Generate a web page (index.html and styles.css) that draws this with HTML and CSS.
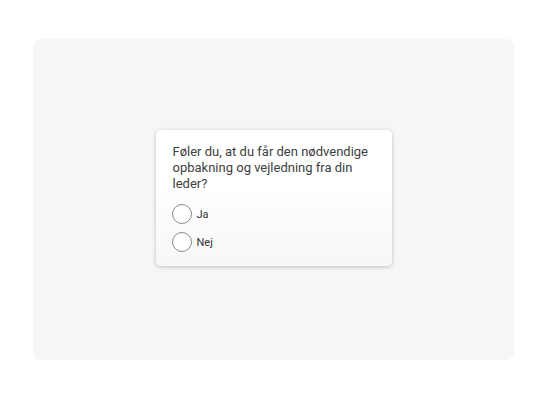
FILE: index.html
```html
<!DOCTYPE html>
<html lang="da">
<head>
    <meta charset="UTF-8">
    <meta name="viewport" content="width=device-width, initial-scale=1.0">
    <title>Spørgsmål</title>
    <link rel="stylesheet" href="styles.css">
</head>
<body>
    <div class="stage">
        <div class="question-card">
            <p class="question">Føler du, at du får den nødvendige opbakning og vejledning fra din leder?</p>
            <div class="options">
                <label class="option">
                    <span class="radio"></span>
                    <span class="option-label">Ja</span>
                </label>
                <label class="option">
                    <span class="radio"></span>
                    <span class="option-label">Nej</span>
                </label>
            </div>
        </div>
    </div>
</body>
</html>
```

FILE: styles.css
```css
* {
    box-sizing: border-box;
}
body {
    margin: 0;
    background: #fff;
    font-family: Roboto, "Liberation Sans", sans-serif;
}
.stage {
    margin: 39px 0 0 33px;
    width: 481px;
    height: 321px;
    background: #f6f6f6;
    border-radius: 8px;
    display: flex;
    justify-content: center;
    align-items: center;
}
.question-card {
    width: 236px;
    margin-top: -3px;
    padding: 14px 17px 14px;
    background: linear-gradient(#fff 40%, #f7f7f7);
    border-radius: 5px;
    box-shadow: 0 1px 4px rgba(0, 0, 0, 0.22);
}
.question {
    margin: 0;
    font-size: 13px;
    line-height: 16px;
    color: #404040;
}
.options {
    margin-top: 12px;
    display: flex;
    flex-direction: column;
    gap: 8px;
}
.option {
    display: flex;
    align-items: center;
    gap: 5px;
    font-size: 11px;
    color: #333;
}
.radio {
    width: 20px;
    height: 20px;
    margin-left: -1px;
    border: 1px solid #8a8a8a;
    border-radius: 50%;
    background: #fff;
}
```
